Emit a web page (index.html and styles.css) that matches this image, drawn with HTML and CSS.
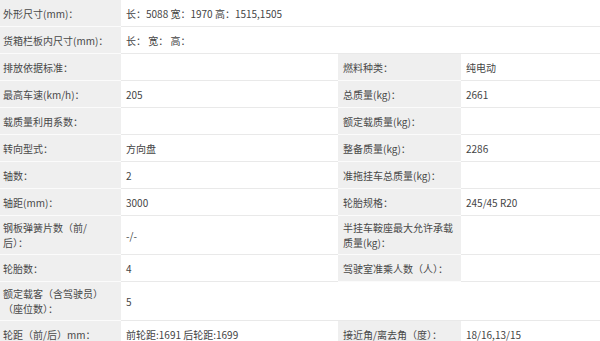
FILE: index.html
```html
<!DOCTYPE html>
<html lang="zh">
<head>
<meta charset="utf-8">
<link rel="stylesheet" href="styles.css">
</head>
<body>
<div class="spec">
  <div class="lb">外形尺寸(mm)：</div>
  <div class="val span3">长：5088 宽：1970 高：1515,1505</div>

  <div class="lb">货箱栏板内尺寸(mm)：</div>
  <div class="val span3">长： 宽： 高：</div>

  <div class="lb">排放依据标准：</div>
  <div class="val"></div>
  <div class="lb lb2">燃料种类：</div>
  <div class="val">纯电动</div>

  <div class="lb">最高车速(km/h)：</div>
  <div class="val">205</div>
  <div class="lb lb2">总质量(kg)：</div>
  <div class="val">2661</div>

  <div class="lb">载质量利用系数：</div>
  <div class="val"></div>
  <div class="lb lb2">额定载质量(kg)：</div>
  <div class="val"></div>

  <div class="lb">转向型式：</div>
  <div class="val">方向盘</div>
  <div class="lb lb2">整备质量(kg)：</div>
  <div class="val">2286</div>

  <div class="lb">轴数：</div>
  <div class="val">2</div>
  <div class="lb lb2">准拖挂车总质量(kg)：</div>
  <div class="val"></div>

  <div class="lb">轴距(mm)：</div>
  <div class="val">3000</div>
  <div class="lb lb2">轮胎规格：</div>
  <div class="val">245/45 R20</div>

  <div class="lb tall">钢板弹簧片数（前/<br>后）：</div>
  <div class="val">-/-</div>
  <div class="lb lb2 tall">半挂车鞍座最大允许承载<br>质量(kg)：</div>
  <div class="val"></div>

  <div class="lb">轮胎数：</div>
  <div class="val">4</div>
  <div class="lb lb2">驾驶室准乘人数（人）：</div>
  <div class="val"></div>

  <div class="lb tall">额定载客（含驾驶员）<br>（座位数）：</div>
  <div class="val">5</div>
  <div class="val span2"></div>

  <div class="lb">轮距（前/后）mm：</div>
  <div class="val">前轮距:1691 后轮距:1699</div>
  <div class="lb lb2">接近角/离去角（度）：</div>
  <div class="val">18/16,13/15</div>
</div>
</body>
</html>
```

FILE: styles.css
```css
html, body {
  margin: 0;
  padding: 0;
  background: #ffffff;
}

body {
  font-family: "Noto Sans CJK SC", "Noto Sans", sans-serif;
  font-size: 10px;
  color: #444444;
  width: 600px;
  height: 341px;
  overflow: hidden;
}

.spec {
  display: grid;
  grid-template-columns: 121px 217px 123px 139px;
}

.lb,
.val {
  box-sizing: border-box;
  padding: 4px 4px;
  line-height: 15px;
  display: flex;
  flex-direction: column;
  justify-content: center;
  white-space: nowrap;
}

.spec > div {
  border-bottom: 1px solid #e9e9e9;
  min-height: 27px;
}

.lb {
  background: #efefef;
  padding-left: 3px;
  color: #484848;
}

.spec > .lb {
  border-bottom-color: #fbfbfb;
}

.lb2 {
  padding-left: 5px;
}

.val {
  background: #ffffff;
  padding-left: 5px;
}

.spec > .tall {
  min-height: 39px;
}

.span3 {
  grid-column: span 3;
}

.span2 {
  grid-column: span 2;
}
```
